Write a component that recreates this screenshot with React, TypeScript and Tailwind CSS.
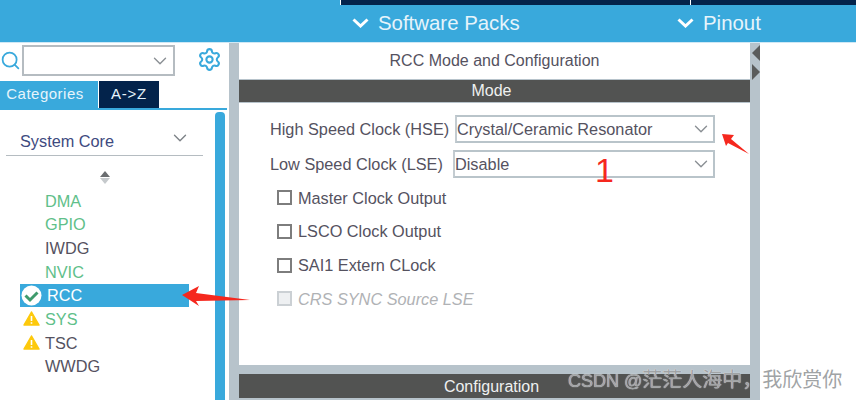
import { ChevronDown, Search, Settings } from 'lucide-react'

const font = "font-['Liberation_Sans','Noto_Sans_CJK_SC',sans-serif]"

const peripherals = [
  { name: 'DMA', color: 'text-[#5fc08a]' },
  { name: 'GPIO', color: 'text-[#5fc08a]' },
  { name: 'IWDG', color: 'text-[#55525f]' },
  { name: 'NVIC', color: 'text-[#5fc08a]' },
  { name: 'RCC', color: 'text-white', icon: 'ok', active: true },
  { name: 'SYS', color: 'text-[#5fc08a]', icon: 'warn' },
  { name: 'TSC', color: 'text-[#55525f]', icon: 'warn' },
  { name: 'WWDG', color: 'text-[#55525f]' },
]

const options = [
  { label: 'Master Clock Output' },
  { label: 'LSCO Clock Output' },
  { label: 'SAI1 Extern CLock' },
  { label: 'CRS SYNC Source LSE', disabled: true },
]

function Warn() {
  return (
    <svg width="17" height="15" viewBox="0 0 17 15" className="shrink-0">
      <path d="M8.5 1 L16 14 H1 Z" fill="#fdc90c" stroke="#fdc90c" strokeLinejoin="round" strokeWidth="1.5" />
      <path d="M8.5 5 V10 M8.5 11.3 V12.8" stroke="#fff" strokeWidth="1.6" />
    </svg>
  )
}

function Ok() {
  return (
    <svg width="21" height="21" viewBox="0 0 21 21" className="shrink-0">
      <circle cx="10.5" cy="10.5" r="10" fill="#fff" />
      <path d="M4.5 10.5 L9 15 L16.5 7.5" fill="none" stroke="#3f9b6c" strokeWidth="3" />
    </svg>
  )
}

function HeaderChevron() {
  return (
    <svg width="17" height="10" viewBox="0 0 17 10" className="shrink-0">
      <path d="M1.5 1.5 L8.5 8 L15.5 1.5" fill="none" stroke="#fff" strokeWidth="3" />
    </svg>
  )
}

function Select({ value, className }: { value: string; className: string }) {
  return (
    <div className={`flex h-7 items-center justify-between border-2 border-[#b9c4ca] border-l-[#c4ccd1] pr-px text-[16.3px] text-[#55525f] ${className}`}>
      <span>{value}</span>
      <ChevronDown size={22} strokeWidth={1.5} className="text-[#8a8f94]" />
    </div>
  )
}

export default function App() {
  return (
    <div className={`relative flex h-[400px] w-[856px] flex-col overflow-hidden bg-white ${font}`}>
      <header className="h-[43px] shrink-0 border-b border-[#cfe8f5] bg-[#39a9dc]">
        <div className="flex h-[5px]">
          <div className="w-[340px]" />
          <div className="w-px bg-white" />
          <div className="w-[349px] bg-[#03234b]" />
          <div className="w-px bg-white" />
          <div className="flex-1 bg-[#03234b]" />
        </div>
        <div className="flex h-[37px] items-center text-[20.4px] text-[#e6f4fb]">
          <div className="flex w-[677px] items-center gap-[9px] pl-[352px]">
            <HeaderChevron />
            <span>Software Packs</span>
          </div>
          <div className="flex items-center gap-[9px]">
            <HeaderChevron />
            <span>Pinout</span>
          </div>
        </div>
      </header>

      <div className="flex min-h-0 flex-1">
        <aside className="flex w-[229px] shrink-0 flex-col">
          <div className="flex h-[38px] items-start pt-[2px]">
            <Search size={21} strokeWidth={2} className="mt-[5px] shrink-0 text-[#39a9dc]" />
            <div className="ml-px flex h-[31px] w-[153px] items-center justify-end border-2 border-[#b5bcc1] pr-[2px]">
              <ChevronDown size={22} strokeWidth={1.5} className="text-[#8a8f94]" />
            </div>
            <Settings size={25} strokeWidth={2} className="ml-[22px] mt-[2px] text-[#39a9dc]" />
          </div>
          <div className="mr-[2px] flex h-[29px] border-b-2 border-[#39a9dc]">
            <div className="flex w-[98px] items-center justify-center bg-[#39a9dc] pr-2 text-[15px] tracking-[0.5px] text-[#e6f4fb]">
              Categories
            </div>
            <div className="ml-px flex w-[60px] items-center justify-center bg-[#03234b] text-[15px] tracking-[0.8px] text-[#e6f4fb]">
              {'A->Z'}
            </div>
          </div>
          <div className="flex min-h-0 flex-1 pt-[2px]">
            <div className="min-w-0 flex-1">
              <div className="ml-[6px] mr-[12px] mt-[11px] flex h-[33px] items-start justify-between border-b border-[#b5bcc1] pl-[14px] pr-[12px] pt-[6px] text-[16.3px] text-[#3e4a80]">
                <span>System Core</span>
                <ChevronDown size={22} strokeWidth={1.5} className="-mt-[2px] text-[#7d8287]" />
              </div>
              <div className="flex justify-center pt-[15px]">
                <div className="mr-[6px] flex w-[10px] flex-col items-center gap-[1px]">
                  <div className="h-0 w-0 border-x-[5px] border-b-[6px] border-x-transparent border-b-[#6a6d70]" />
                  <div className="h-0 w-0 border-x-[5px] border-t-[6px] border-x-transparent border-t-[#c5c9cc]" />
                </div>
              </div>
              <ul className="ml-[20px] mt-[5px] w-[169px] text-[16.3px]">
                {peripherals.map((p) => (
                  <li
                    key={p.name}
                    className={`relative flex h-[23.7px] items-center pl-[25px] ${p.color} ${p.active ? 'bg-[#39a9dc] pl-[27px]' : ''}`}
                  >
                    {p.icon === 'ok' && (
                      <span className="absolute left-[1px] top-px">
                        <Ok />
                      </span>
                    )}
                    {p.icon === 'warn' && (
                      <span className="absolute left-[3px] top-[4px]">
                        <Warn />
                      </span>
                    )}
                    {p.name}
                  </li>
                ))}
              </ul>
            </div>
            <div className="mr-[4px] w-[10px] rounded-t-[4px] bg-[#39a9dc]" />
          </div>
        </aside>

        <div className="w-[10px] shrink-0 bg-[#b7c3cb]" />

        <main className="flex w-[511px] shrink-0 flex-col">
          <div className="flex h-[36px] items-center justify-center pb-[1px] text-[16px] text-[#55525f]">
            RCC Mode and Configuration
          </div>
          <div className="flex h-[24px] items-center justify-center border-y border-[#b7c3cb] bg-[#525352] pb-px pr-[6px] text-[16px] text-[#eef0f0]">
            Mode
          </div>
          <div className="flex-1 pl-[31px] pt-[12px] text-[16.3px] text-[#55525f]">
            <div className="flex h-[28px] items-center">
              <span className="w-[185px]">High Speed Clock (HSE)</span>
              <Select value="Crystal/Ceramic Resonator" className="w-[260px]" />
            </div>
            <div className="mt-[7px] flex h-[28px] items-center">
              <span className="w-[183px]">Low Speed Clock (LSE)</span>
              <Select value="Disable" className="w-[262px]" />
            </div>
            <div className="ml-[7px] mt-[3px]">
              {options.map((o) => (
                <label
                  key={o.label}
                  className={`flex h-[33.7px] items-center gap-[6px] ${o.disabled ? 'italic text-[#b0b2b5]' : ''}`}
                >
                  <span className={`h-[15px] w-[15px] shrink-0 border-2 ${o.disabled ? 'border-[#cbd0d4] bg-[#eef0f2]' : 'border-[#7d7d7d] bg-white'}`} />
                  {o.label}
                </label>
              ))}
            </div>
          </div>
          <div className="h-[9px] bg-[#b7c3cb]" />
          <div className="flex h-[24px] items-center justify-center bg-[#525352] pr-[6px] pt-px text-[16px] text-[#eef0f0]">
            Configuration
          </div>
          <div className="h-[2px] bg-[#b7c3cb]" />
        </main>

        <div className="relative w-[10px] shrink-0 bg-[#b7c3cb]">
          <div className="absolute left-[2px] top-[2px] h-0 w-0 border-y-[8px] border-r-[8px] border-y-transparent border-r-[#5a5c5c]" />
          <div className="absolute left-[2px] top-[21px] h-0 w-0 border-y-[8px] border-l-[8px] border-y-transparent border-l-[#5a5c5c]" />
        </div>
        <div className="flex-1" />
      </div>

      {/* red annotations over the screenshot */}
      <svg className="absolute left-0 top-0" width="856" height="400" viewBox="0 0 856 400">
        <path d="M182 295 L199 286 L196 293 L250 300 L196 301 L199 306 Z" fill="#f5281e" />
        <path d="M722 134 L734 135 L731 139 L749 154 L728 143 L726 146 Z" fill="#f5281e" />
      </svg>
      <span className="absolute left-[595px] top-[150px] text-[34px] leading-[40px] text-[#f5281e]">1</span>
      <span className="absolute left-[568px] top-[368px] whitespace-nowrap text-[18px] leading-[24px] text-[#a0a3a5] [text-shadow:0_0_1px_#fff]">
        CSDN @<span className="text-[20px]">茫茫人海中，我欣赏你</span>
      </span>
    </div>
  )
}
